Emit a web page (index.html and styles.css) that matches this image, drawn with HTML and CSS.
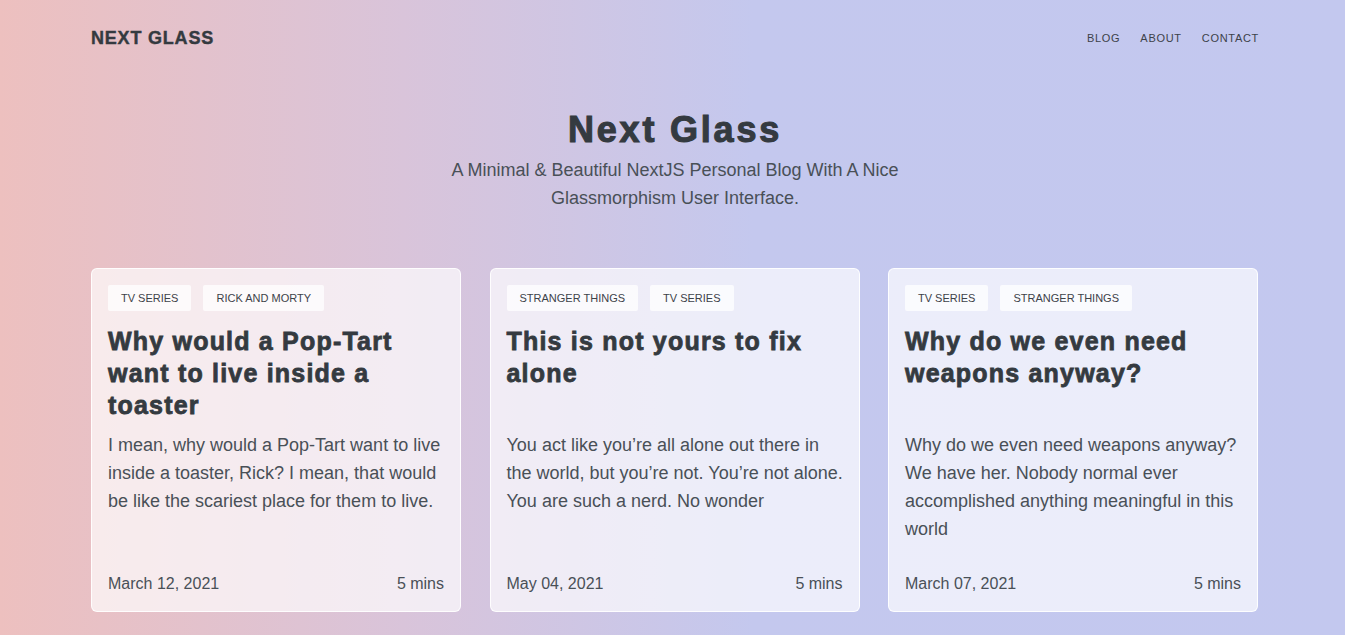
FILE: index.html
```html
<!DOCTYPE html>
<html lang="en">
<head>
<meta charset="utf-8">
<title>Next Glass</title>
<link rel="stylesheet" href="styles.css">
</head>
<body>
<div class="page">
  <header class="header">
    <a class="logo" href="#">NEXT GLASS</a>
    <nav class="nav">
      <a href="#">BLOG</a>
      <a href="#">ABOUT</a>
      <a href="#">CONTACT</a>
    </nav>
  </header>
  <section class="hero">
    <h1 class="hero-title">Next Glass</h1>
    <p class="hero-sub">A Minimal &amp; Beautiful NextJS Personal Blog With A Nice<br>Glassmorphism User Interface.</p>
  </section>
  <main class="cards">
    <article class="card">
      <div class="tags"><span class="tag">TV SERIES</span><span class="tag">RICK AND MORTY</span></div>
      <h2 class="card-title">Why would a Pop-Tart want to live inside a toaster</h2>
      <p class="card-body">I mean, why would a Pop-Tart want to live inside a toaster, Rick? I mean, that would be like the scariest place for them to live.</p>
      <div class="card-foot"><span>March 12, 2021</span><span>5 mins</span></div>
    </article>
    <article class="card">
      <div class="tags"><span class="tag">STRANGER THINGS</span><span class="tag">TV SERIES</span></div>
      <h2 class="card-title">This is not yours to fix alone</h2>
      <p class="card-body">You act like you’re all alone out there in the world, but you’re not. You’re not alone. You are such a nerd. No wonder</p>
      <div class="card-foot"><span>May 04, 2021</span><span>5 mins</span></div>
    </article>
    <article class="card">
      <div class="tags"><span class="tag">TV SERIES</span><span class="tag">STRANGER THINGS</span></div>
      <h2 class="card-title">Why do we even need weapons anyway?</h2>
      <p class="card-body">Why do we even need weapons anyway? We have her. Nobody normal ever accomplished anything meaningful in this world</p>
      <div class="card-foot"><span>March 07, 2021</span><span>5 mins</span></div>
    </article>
  </main>
</div>
</body>
</html>
```
FILE: styles.css
```css
* { box-sizing: border-box; }
html, body { margin: 0; padding: 0; }
body {
  min-height: 635px;
  font-family: "Liberation Sans", Arial, sans-serif;
  color: #343a40;
  background: linear-gradient(90deg, #edc0bf 0%, #d9c4da 30%, #c4c8ee 56%, #c3c8ef 100%);
  padding-left: 5px;
  overflow: hidden;
}
a { color: inherit; text-decoration: none; }
.page {
  width: 1168px;
  margin: 0 auto;
}
.header {
  height: 76px;
  display: flex;
  align-items: center;
  justify-content: space-between;
}
.logo {
  font-size: 18px;
  font-weight: 700;
  letter-spacing: 0.8px;
  color: #343a40;
  -webkit-text-stroke: 0.4px #343a40;
}
.nav {
  display: flex;
  gap: 20px;
  font-size: 11px;
  letter-spacing: 0.7px;
  color: #3d4249;
}
.hero {
  text-align: center;
  margin-top: 32px;
}
.hero-title {
  margin: 0;
  font-size: 36px;
  line-height: 44px;
  font-weight: 700;
  letter-spacing: 2.8px;
  color: #343a40;
  -webkit-text-stroke: 1.1px #343a40;
}
.hero-sub {
  margin: 4px 0 0;
  font-size: 18px;
  line-height: 28px;
  color: #495057;
}
.cards {
  margin-top: 56px;
  display: grid;
  grid-template-columns: repeat(3, 370px);
  gap: 28.5px;
}
.card {
  display: flex;
  flex-direction: column;
  min-height: 344px;
  padding: 16px 16px 13px;
  background: rgba(255, 255, 255, 0.67);
  border: 1px solid rgba(255, 255, 255, 0.9);
  border-radius: 6px;
}
.tags {
  display: flex;
  gap: 12px;
}
.tag {
  height: 26px;
  line-height: 26px;
  padding: 0 13px;
  font-size: 11px;
  color: #3d4249;
  background: rgba(255, 255, 255, 0.75);
  border-radius: 2px;
}
.card-title {
  margin: 14px 0 0;
  height: 96px;
  font-size: 25px;
  line-height: 32px;
  font-weight: 700;
  letter-spacing: 1.2px;
  color: #343a40;
  -webkit-text-stroke: 0.8px #343a40;
}
.card-body {
  margin: 10px -3px 0 0;
  font-size: 18px;
  line-height: 28px;
  color: #495057;
}
.card-foot {
  margin-top: auto;
  padding-top: 27px;
  display: flex;
  justify-content: space-between;
  font-size: 16px;
  line-height: 28px;
  color: #495057;
}
```
